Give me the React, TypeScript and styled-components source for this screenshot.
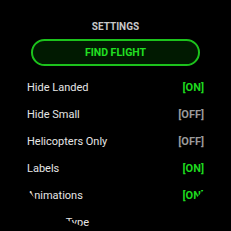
import React from 'react'
import styled, { createGlobalStyle } from 'styled-components'

const GlobalStyle = createGlobalStyle`
  html, body {
    margin: 0;
    padding: 0;
    background: #000;
  }
  body {
    font-family: Roboto, 'Noto Sans', sans-serif;
  }
`

interface Setting {
  label: string
  on: boolean
}

const settings: Setting[] = [
  { label: 'Hide Landed', on: true },
  { label: 'Hide Small', on: false },
  { label: 'Helicopters Only', on: false },
  { label: 'Labels', on: true },
  { label: 'Animations', on: true },
  { label: 'Aircraft Type', on: true },
]

const App: React.FC = () => {
  return (
    <>
      <GlobalStyle />
      <StyledScreen>
        <StyledTitle>SETTINGS</StyledTitle>
        <StyledButton>FIND FLIGHT</StyledButton>
        <StyledList>
          {settings.map((s) => (
            <StyledRow key={s.label}>
              <StyledLabel>{s.label}</StyledLabel>
              <StyledValue $on={s.on}>{s.on ? '[ON]' : '[OFF]'}</StyledValue>
            </StyledRow>
          ))}
        </StyledList>
      </StyledScreen>
    </>
  )
}

const StyledScreen = styled.div`
  width: 231px;
  height: 231px;
  border-radius: 50%;
  overflow: hidden;
  background: #000;
  box-sizing: border-box;
  padding-top: 20px;
  display: flex;
  flex-direction: column;
  align-items: stretch;
`

const StyledTitle = styled.div`
  color: #c8c8c8;
  font-size: 10px;
  font-weight: 700;
  line-height: 14px;
  text-align: center;
`

const StyledButton = styled.div`
  margin: 5px 31px 0;
  height: 27px;
  flex-shrink: 0;
  box-sizing: border-box;
  border: 2px solid #1cc21c;
  border-radius: 14px;
  background: #011a01;
  color: #22e022;
  font-size: 10.5px;
  font-weight: 700;
  display: flex;
  align-items: center;
  justify-content: center;
`

const StyledList = styled.div`
  margin-top: 8px;
  padding: 0 27px;
  display: flex;
  flex-direction: column;
`

const StyledRow = styled.div`
  height: 27px;
  flex-shrink: 0;
  display: flex;
  align-items: center;
  justify-content: space-between;
`

const StyledLabel = styled.span`
  color: #e6e6e6;
  font-size: 11px;
`

const StyledValue = styled.span<{ $on: boolean }>`
  color: ${(props) => (props.$on ? '#1ed81e' : '#9a9a9a')};
  font-size: 11px;
  font-weight: 700;
`

export default App
